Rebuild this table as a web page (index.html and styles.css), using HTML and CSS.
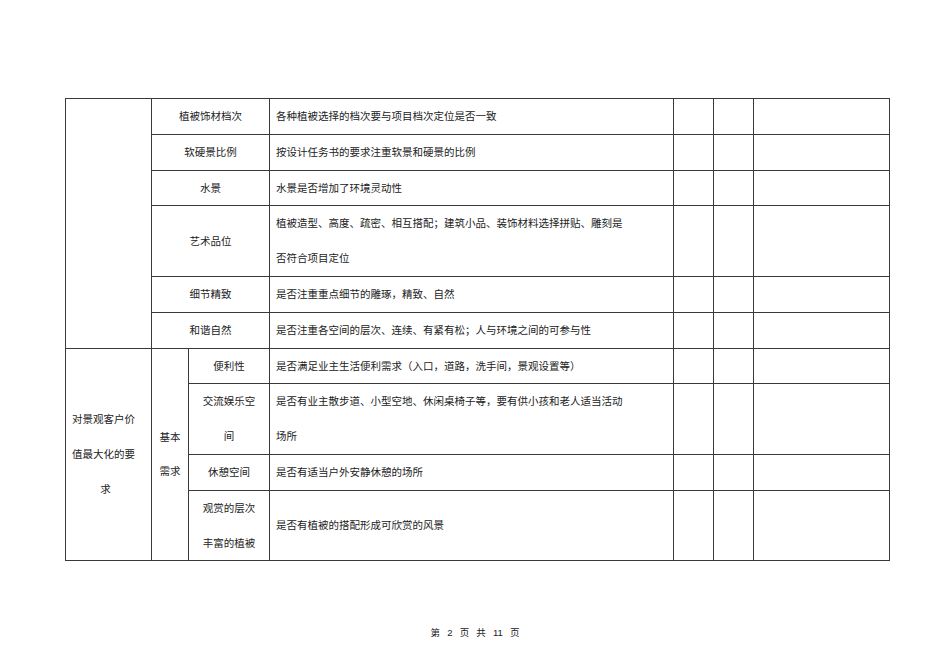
FILE: index.html
```html
<!DOCTYPE html>
<html lang="zh-CN">
<head>
<meta charset="utf-8">
<title>第 2 页</title>
<link rel="stylesheet" href="styles.css">
</head>
<body>
<div class="page">
  <table class="sheet">
    <colgroup>
      <col class="c-a"><col class="c-b"><col class="c-c"><col class="c-d"><col class="c-e"><col class="c-f"><col class="c-g">
    </colgroup>
    <tbody>
      <tr>
        <td rowspan="6"></td>
        <td colspan="2" class="item">植被饰材档次</td>
        <td class="desc">各种植被选择的档次要与项目档次定位是否一致</td>
        <td></td><td></td><td></td>
      </tr>
      <tr>
        <td colspan="2" class="item">软硬景比例</td>
        <td class="desc">按设计任务书的要求注重软景和硬景的比例</td>
        <td></td><td></td><td></td>
      </tr>
      <tr>
        <td colspan="2" class="item">水景</td>
        <td class="desc">水景是否增加了环境灵动性</td>
        <td></td><td></td><td></td>
      </tr>
      <tr>
        <td colspan="2" class="item">艺术品位</td>
        <td class="desc">植被造型、高度、疏密、相互搭配；建筑小品、装饰材料选择拼贴、雕刻是否符合项目定位</td>
        <td></td><td></td><td></td>
      </tr>
      <tr>
        <td colspan="2" class="item">细节精致</td>
        <td class="desc">是否注重重点细节的雕琢，精致、自然</td>
        <td></td><td></td><td></td>
      </tr>
      <tr>
        <td colspan="2" class="item">和谐自然</td>
        <td class="desc">是否注重各空间的层次、连续、有紧有松；人与环境之间的可参与性</td>
        <td></td><td></td><td></td>
      </tr>
      <tr>
        <td rowspan="4" class="group">对景观客户价值最大化的要求</td>
        <td rowspan="4" class="sub">基本需求</td>
        <td class="item narrow">便利性</td>
        <td class="desc">是否满足业主生活便利需求（入口，道路，洗手间，景观设置等）</td>
        <td></td><td></td><td></td>
      </tr>
      <tr>
        <td class="item narrow">交流娱乐空间</td>
        <td class="desc">是否有业主散步道、小型空地、休闲桌椅子等，要有供小孩和老人适当活动场所</td>
        <td></td><td></td><td></td>
      </tr>
      <tr>
        <td class="item narrow">休憩空间</td>
        <td class="desc">是否有适当户外安静休憩的场所</td>
        <td></td><td></td><td></td>
      </tr>
      <tr>
        <td class="item narrow">观赏的层次丰富的植被</td>
        <td class="desc">是否有植被的搭配形成可欣赏的风景</td>
        <td></td><td></td><td></td>
      </tr>
    </tbody>
  </table>
  <p class="footer">第 2 页 共 11 页</p>
</div>
</body>
</html>
```

FILE: styles.css
```css
html, body {
  margin: 0;
  padding: 0;
  background: #ffffff;
}

.page {
  width: 950px;
  padding-top: 98px;
}

.sheet {
  margin-left: 65px;
  width: 824px;
  table-layout: fixed;
  border-collapse: collapse;
  font-family: "Noto Sans CJK SC", "Noto Sans CJK JP", sans-serif;
  font-size: 10.5px;
  color: #222222;
}

.c-a { width: 86px; }
.c-b { width: 37px; }
.c-c { width: 81px; }
.c-d { width: 404px; }
.c-e { width: 40px; }
.c-f { width: 40px; }
.c-g { width: 136px; }

.sheet td {
  border: 1px solid #3a3a3a;
  padding: 0;
  line-height: 34.8px;
  vertical-align: middle;
  word-break: break-all;
}

.sheet td.item {
  text-align: center;
}

.sheet td.item.narrow {
  padding: 0 12px;
}

.sheet td.desc {
  text-align: left;
  padding: 0 50px 0 6px;
}

.sheet td.group {
  text-align: left;
  text-align-last: center;
  padding: 0 12px 0 6px;
}

.sheet td.sub {
  text-align: center;
  padding: 0 7px;
}

.footer {
  margin: 66px 0 0 0;
  text-align: center;
  font-family: "Liberation Sans", "Noto Sans CJK SC", sans-serif;
  font-size: 9.5px;
  line-height: 12px;
  word-spacing: 4.5px;
  color: #222222;
}
```
